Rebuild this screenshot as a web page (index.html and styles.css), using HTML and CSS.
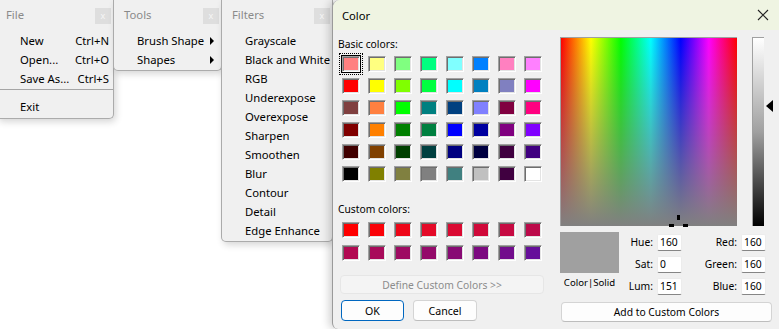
FILE: index.html
```html
<!DOCTYPE html>
<html>
<head>
<meta charset="utf-8">
<link rel="stylesheet" href="styles.css">
</head>
<body>
<div class="desk">
  <div class="menuwin file">
    <div class="whead"><span class="wtitle">File</span><span class="wclose">x</span></div>
    <div class="mrow"><span>New</span><span class="sc">Ctrl+N</span></div>
    <div class="mrow"><span>Open...</span><span class="sc">Ctrl+O</span></div>
    <div class="mrow"><span>Save As...</span><span class="sc">Ctrl+S</span></div>
    <div class="msep"></div>
    <div class="mrow"><span>Exit</span></div>
  </div>
  <div class="menuwin tools">
    <div class="whead"><span class="wtitle">Tools</span><span class="wclose">x</span></div>
    <div class="mrow"><span>Brush Shape</span><span class="sub"></span></div>
    <div class="mrow"><span>Shapes</span><span class="sub"></span></div>
  </div>
  <div class="menuwin filters">
    <div class="whead"><span class="wtitle">Filters</span><span class="wclose">x</span></div>
    <div class="mrow"><span>Grayscale</span></div>
    <div class="mrow"><span>Black and White</span></div>
    <div class="mrow"><span>RGB</span></div>
    <div class="mrow"><span>Underexpose</span></div>
    <div class="mrow"><span>Overexpose</span></div>
    <div class="mrow"><span>Sharpen</span></div>
    <div class="mrow"><span>Smoothen</span></div>
    <div class="mrow"><span>Blur</span></div>
    <div class="mrow"><span>Contour</span></div>
    <div class="mrow"><span>Detail</span></div>
    <div class="mrow"><span>Edge Enhance</span></div>
  </div>
  <div class="dialog">
    <div class="dtitle">
      <span>Color</span>
      <svg class="dx" width="12" height="12" viewBox="0 0 12 12"><path d="M1 1 L11 11 M11 1 L1 11" stroke="#222" stroke-width="1.1" fill="none"/></svg>
    </div>
    <div class="dbody">
      <div class="leftcol">
        <div class="lbl">Basic colors:</div>
        <div class="swgrid basic">
          <span class="sw sel" style="background:#ff8080"></span><span class="sw" style="background:#ffff80"></span><span class="sw" style="background:#80ff80"></span><span class="sw" style="background:#00ff80"></span><span class="sw" style="background:#80ffff"></span><span class="sw" style="background:#0080ff"></span><span class="sw" style="background:#ff80c0"></span><span class="sw" style="background:#ff80ff"></span>
          <span class="sw" style="background:#ff0000"></span><span class="sw" style="background:#ffff00"></span><span class="sw" style="background:#80ff00"></span><span class="sw" style="background:#00ff40"></span><span class="sw" style="background:#00ffff"></span><span class="sw" style="background:#0080c0"></span><span class="sw" style="background:#8080c0"></span><span class="sw" style="background:#ff00ff"></span>
          <span class="sw" style="background:#804040"></span><span class="sw" style="background:#ff8040"></span><span class="sw" style="background:#00ff00"></span><span class="sw" style="background:#008080"></span><span class="sw" style="background:#004080"></span><span class="sw" style="background:#8080ff"></span><span class="sw" style="background:#800040"></span><span class="sw" style="background:#ff0080"></span>
          <span class="sw" style="background:#800000"></span><span class="sw" style="background:#ff8000"></span><span class="sw" style="background:#008000"></span><span class="sw" style="background:#008040"></span><span class="sw" style="background:#0000ff"></span><span class="sw" style="background:#0000a0"></span><span class="sw" style="background:#800080"></span><span class="sw" style="background:#8000ff"></span>
          <span class="sw" style="background:#400000"></span><span class="sw" style="background:#804000"></span><span class="sw" style="background:#004000"></span><span class="sw" style="background:#004040"></span><span class="sw" style="background:#000080"></span><span class="sw" style="background:#000040"></span><span class="sw" style="background:#400040"></span><span class="sw" style="background:#400080"></span>
          <span class="sw" style="background:#000000"></span><span class="sw" style="background:#808000"></span><span class="sw" style="background:#808040"></span><span class="sw" style="background:#808080"></span><span class="sw" style="background:#408080"></span><span class="sw" style="background:#c0c0c0"></span><span class="sw" style="background:#400040"></span><span class="sw" style="background:#ffffff"></span>
        </div>
        <div class="lbl custom">Custom colors:</div>
        <div class="swgrid cust">
          <span class="sw" style="background:#ff0000"></span><span class="sw" style="background:#fa0208"></span><span class="sw" style="background:#ee0618"></span><span class="sw" style="background:#e40a28"></span><span class="sw" style="background:#da0a32"></span><span class="sw" style="background:#d00a3a"></span><span class="sw" style="background:#c60a42"></span><span class="sw" style="background:#bc0a4a"></span>
          <span class="sw" style="background:#b20a52"></span><span class="sw" style="background:#a80a5a"></span><span class="sw" style="background:#9e0a62"></span><span class="sw" style="background:#940a6a"></span><span class="sw" style="background:#880a74"></span><span class="sw" style="background:#7c0a80"></span><span class="sw" style="background:#720c8c"></span><span class="sw" style="background:#660e9a"></span>
        </div>
        <div class="btn define">Define Custom Colors &gt;&gt;</div>
        <div class="btnrow">
          <div class="btn ok">OK</div>
          <div class="btn cancel">Cancel</div>
        </div>
      </div>
      <div class="rightcol">
        <div class="pickrow">
          <div class="spectrum">
            <span class="ch chv"></span><span class="ch chl"></span><span class="ch chr"></span>
          </div>
          <div class="lumbar"></div>
          <div class="lumarrow"></div>
        </div>
        <div class="valrow">
          <div class="preview">
            <div class="pbox"></div>
            <div class="plabel">Color|Solid</div>
          </div>
          <div class="fields">
            <span class="flab">Hue:</span><span class="fin">160</span><span class="flab">Red:</span><span class="fin">160</span>
            <span class="flab">Sat:</span><span class="fin">0</span><span class="flab">Green:</span><span class="fin">160</span>
            <span class="flab">Lum:</span><span class="fin">151</span><span class="flab">Blue:</span><span class="fin">160</span>
          </div>
        </div>
        <div class="btn add">Add to Custom Colors</div>
      </div>
    </div>
  </div>
</div>
</body>
</html>
```
FILE: styles.css
```css
* { box-sizing: border-box; }
html, body { margin: 0; padding: 0; background: #ffffff; }
body {
  font-family: "Noto Sans", "Open Sans", sans-serif;
  font-size: 11.3px;
  color: #000;
  width: 779px;
  height: 329px;
  overflow: hidden;
}
.desk {
  display: flex;
  align-items: flex-start;
}
.menuwin {
  background: #f0f0f0;
  border: 1px solid #ababab;
  border-top: none;
  border-radius: 0 0 5px 5px;
  box-shadow: 2px 3px 7px rgba(0,0,0,0.16);
  position: relative;
  padding-bottom: 1px;
}
.file { width: 118px; margin-left: -4px; border-left: none; padding-bottom: 2px; z-index: 1; }
.tools { width: 109px; margin-left: -1px; z-index: 2; }
.filters { width: 112px; margin-left: -1px; z-index: 3; }
.whead {
  height: 31px;
  display: flex;
  align-items: flex-start;
  justify-content: space-between;
  padding: 5px 2px 0 10px;
}
.wtitle { color: #8a8a8a; line-height: 19px; }
.wclose {
  width: 16px; height: 16px; margin-top: 3px;
  background: #dedede;
  color: #f6f6f6;
  font-size: 9px;
  line-height: 15px;
  text-align: center;
}
.mrow {
  height: 19px;
  line-height: 19px;
  display: flex;
  justify-content: space-between;
  align-items: center;
  padding: 0 4px 0 23px;
  white-space: nowrap;
}
.file .mrow { padding-left: 24px; }
.tools .mrow { padding-right: 7px; }
.sub {
  width: 0; height: 0;
  border-left: 4px solid #000;
  border-top: 4px solid transparent;
  border-bottom: 4px solid transparent;
}
.msep { height: 1px; background: #a5a5a5; margin: 1px 0 7px; }

.dialog {
  width: 447px;
  height: 329px;
  margin-left: -1px;
  background: #f0f0f0;
  border-left: 1px solid #9a9a9a;
  border-top-left-radius: 8px;
  border-bottom-left-radius: 6px;
  box-shadow: -3px 0 8px rgba(0,0,0,0.18);
  position: relative;
  z-index: 4;
  overflow: hidden;
  font-size: 10.3px;
}
.dtitle {
  height: 30px;
  background: #eff4e2;
  display: flex;
  align-items: center;
  justify-content: space-between;
  padding: 0 10px 0 9px;
  font-size: 11.2px;
}
.dbody { display: flex; }
.leftcol { width: 221px; padding: 6px 0 0 5px; }
.lbl { height: 17px; line-height: 17px; }
.swgrid {
  display: grid;
  grid-template-columns: repeat(8, 18px);
  column-gap: 8px;
  padding-left: 4px;
}
.basic { grid-auto-rows: 16px; row-gap: 6px; padding-top: 3px; }
.cust { grid-auto-rows: 16px; row-gap: 7px; padding-top: 4px; }
.custom { margin-top: 19px; }
.sw {
  display: block;
  width: 18px;
  height: 16px;
  border: 1px solid;
  border-color: #a0a0a0 #ffffff #ffffff #a0a0a0;
  box-shadow: inset 1px 1px 0 #6e6e6e, inset -1px -1px 0 #e3e3e3;
  position: relative;
}
.sel { outline: 1px solid #000; }
.sel::after {
  content: "";
  position: absolute;
  left: -4px; top: -4px; right: -4px; bottom: -4px;
  border: 1px dotted #000;
}
.btn {
  display: flex;
  align-items: center;
  justify-content: center;
  border-radius: 4px;
  white-space: nowrap;
}
.define {
  margin: 14px 0 0 2px;
  width: 204px;
  height: 19px;
  background: #f4f4f4;
  border: 1px solid #e6e6e6;
  color: #8c8c8c;
}
.btnrow { display: flex; gap: 9px; margin: 6px 0 0 3px; }
.ok, .cancel { width: 63px; height: 21px; background: #fdfdfd; font-size: 10.6px; }
.ok { border: 1px solid #0067c0; }
.cancel { width: 64px; border: 1px solid #d4d4d4; border-bottom-color: #bdbdbd; }

.rightcol { width: 224px; padding: 7px 0 0 6px; }
.pickrow { display: flex; align-items: flex-start; }
.spectrum {
  width: 177px;
  height: 189px;
  border-top: 1px solid #a0a0a0;
  border-left: 1px solid #a0a0a0;
  position: relative;
  background:
    linear-gradient(to bottom, rgba(128,128,128,0) 0%, #808080 100%),
    linear-gradient(to right, #ff0000 0%, #ffff00 17%, #00ff00 34%, #00ffff 51%, #0000ff 68%, #ff00ff 84%, #ff0000 100%);
}
.ch { position: absolute; background: #000; }
.chv { left: 116px; top: 177px; width: 3px; height: 5px; }
.chl { left: 108px; top: 186px; width: 5px; height: 3px; }
.chr { left: 122px; top: 186px; width: 5px; height: 3px; }
.lumbar {
  width: 12px;
  height: 189px;
  margin-left: 15px;
  border-top: 1px solid #a0a0a0;
  border-left: 1px solid #a0a0a0;
  background: linear-gradient(to bottom, #ffffff 0%, #a0a0a0 50%, #000000 100%);
}
.lumarrow {
  width: 0; height: 0;
  margin: 63px 0 0 2px;
  border-right: 7px solid #000;
  border-top: 6px solid transparent;
  border-bottom: 6px solid transparent;
}
.valrow { display: flex; margin-top: 6px; }
.preview { width: 59px; display: flex; flex-direction: column; align-items: center; }
.pbox { width: 59px; height: 41px; background: #a0a0a0; }
.plabel { margin-top: 1px; line-height: 17px; white-space: nowrap; font-size: 9.6px; }
.fields {
  display: grid;
  grid-template-columns: 34px 25px 51px 25px;
  grid-auto-rows: 17px;
  column-gap: 4px;
  row-gap: 5px;
  margin-top: 2px;
}
.flab { text-align: right; line-height: 17px; }
.fin {
  background: #fff;
  border: 1px solid #ececec;
  border-bottom-color: #868686;
  border-radius: 2px;
  line-height: 15px;
  padding-left: 2px;
}
.add {
  margin: 7px 0 0 1px;
  width: 211px;
  height: 20px;
  background: #fdfdfd;
  border: 1px solid #d4d4d4;
  border-bottom-color: #bdbdbd;
}
```
